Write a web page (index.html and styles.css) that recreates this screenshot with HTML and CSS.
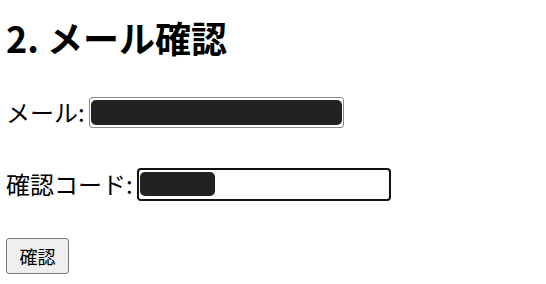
FILE: index.html
```html
<!DOCTYPE html>
<html lang="ja">
<head>
<meta charset="utf-8">
<link rel="stylesheet" href="styles.css">
</head>
<body>
<div class="page">
  <h1 class="title">2. メール確認</h1>
  <div class="row">
    <label class="label">メール:</label>
    <div class="field"><span class="blob blob-mail"></span></div>
  </div>
  <div class="row">
    <label class="label">確認コード:</label>
    <div class="field field-focus"><span class="blob blob-code"></span></div>
  </div>
  <div class="row">
    <button class="btn" type="button">確認</button>
  </div>
</div>
</body>
</html>
```
FILE: styles.css
```css
html, body {
  margin: 0;
  padding: 0;
  background: #fff;
}
body {
  font-family: "Noto Sans CJK JP", "Noto Sans", sans-serif;
  color: #000;
}
.page {
  padding: 12px 6px 0 6px;
  display: flex;
  flex-direction: column;
  gap: 32px;
}
.title {
  margin: 0 0 -2px 0;
  font-size: 36px;
  font-weight: 700;
  line-height: 50px;
  height: 50px;
}
.row {
  height: 40px;
  display: flex;
  align-items: center;
  gap: 4px;
}
.label {
  font-size: 24px;
  line-height: 30px;
}
.field {
  box-sizing: border-box;
  width: 255px;
  height: 31px;
  border: 1px solid #8a8a8a;
  border-radius: 3px;
  display: flex;
  align-items: center;
  padding: 0 1px;
}
.field-focus {
  width: 254px;
  height: 33px;
  border: 2px solid #111;
  border-radius: 4px;
}
.blob {
  display: block;
  background: #222;
  border-radius: 5px;
}
.blob-mail {
  width: 251px;
  height: 25px;
}
.blob-code {
  width: 75px;
  height: 24px;
}
.btn {
  box-sizing: border-box;
  width: 63px;
  height: 36px;
  padding: 0;
  font-family: "Noto Sans CJK JP", sans-serif;
  font-size: 18px;
  color: #000;
  background: #efefef;
  border: 1px solid #767676;
  border-radius: 3px;
}
```
